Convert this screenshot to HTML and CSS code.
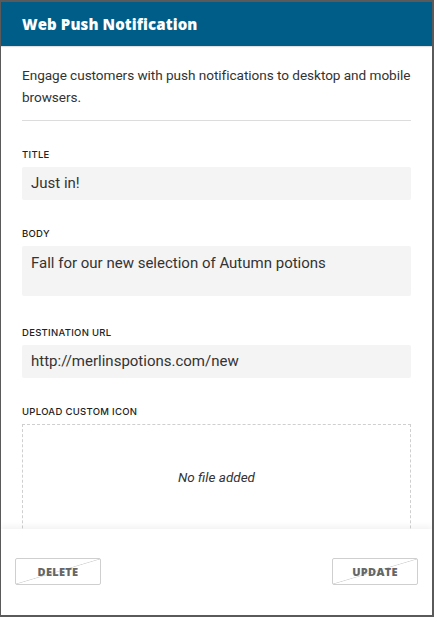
FILE: index.html
```html
<!DOCTYPE html>
<html>
<head>
<meta charset="utf-8">
<link rel="stylesheet" href="styles.css">
</head>
<body>
<div class="frame">
  <header class="header">
    <h1 class="header-title">Web Push Notification</h1>
  </header>
  <main class="content">
    <p class="intro">Engage customers with push notifications to desktop and mobile browsers.</p>
    <div class="field">
      <label class="label">TITLE</label>
      <div class="input">Just in!</div>
    </div>
    <div class="field">
      <label class="label">BODY</label>
      <div class="input textarea">Fall for our new selection of Autumn potions</div>
    </div>
    <div class="field field-wide">
      <label class="label">DESTINATION URL</label>
      <div class="input">http://merlinspotions.com/new</div>
    </div>
    <div class="field">
      <label class="label">UPLOAD CUSTOM ICON</label>
      <div class="dropzone"><em>No file added</em></div>
    </div>
  </main>
  <footer class="footer">
    <button class="btn">DELETE</button>
    <button class="btn">UPDATE</button>
  </footer>
</div>
</body>
</html>
```

FILE: styles.css
```css
* { box-sizing: border-box; }
html, body { margin: 0; padding: 0; }
body { width: 434px; height: 617px; overflow: hidden; background: #fff; }

.frame {
  width: 434px;
  height: 617px;
  border-style: solid;
  border-color: #5a5a5a;
  border-width: 2px 2px 2px 1px;
  display: flex;
  flex-direction: column;
  font-family: "Roboto", "Inter", sans-serif;
  color: #333;
  background: #fff;
  overflow: hidden;
}

.header {
  height: 44px;
  flex: none;
  background: #005d88;
  display: flex;
  align-items: center;
  padding: 0 21px;
  box-shadow: 0 1px 1px rgba(0,0,0,0.12);
  position: relative;
  z-index: 2;
}
.header-title {
  margin: 0;
  color: #fff;
  font-family: "Open Sans", sans-serif;
  font-weight: 800;
  font-size: 15px;
  letter-spacing: 0.1px;
}

.content {
  flex: 1;
  overflow: hidden;
  padding: 0 21px;
}

.intro {
  margin: 0;
  padding: 18px 0 12px;
  font-size: 13.6px;
  letter-spacing: -0.05px;
  line-height: 22px;
  border-bottom: 1px solid #dcdcdc;
  color: #333;
}

.field { margin-top: 28px; }
.field-wide { margin-top: 31px; }
.label {
  display: block;
  font-family: "Inter", sans-serif;
  font-size: 9.5px;
  font-weight: 500;
  letter-spacing: 0.3px;
  color: #222;
  line-height: 12px;
  margin-bottom: 6px;
}
.input {
  height: 33px;
  background: #f4f4f4;
  border-radius: 2px;
  padding: 0 9px;
  font-size: 15px;
  line-height: 33px;
  color: #333;
}
.textarea {
  height: 50px;
  line-height: 20px;
  padding-top: 7px;
}
.dropzone {
  height: 150px;
  border: 1px dashed #cfcfcf;
  display: flex;
  justify-content: center;
  padding-top: 44px;
  font-size: 13.5px;
}
.dropzone em { font-style: italic; }

.footer {
  flex: none;
  height: 86px;
  background: #fff;
  display: flex;
  justify-content: space-between;
  align-items: flex-start;
  padding: 29px 14px 0 14px;
  box-shadow: 0 -3px 6px rgba(0,0,0,0.05);
  position: relative;
  z-index: 2;
}
.btn {
  width: 86px;
  height: 27px;
  border: 1px solid #cfcfcf;
  border-radius: 2px;
  background: linear-gradient(to bottom right, transparent calc(50% - 0.7px), #d6d6d6 50%, transparent calc(50% + 0.7px));
  font-family: "Open Sans", sans-serif;
  font-weight: 800;
  font-size: 11px;
  letter-spacing: 0.3px;
  color: #666;
  padding: 0;
}
```
